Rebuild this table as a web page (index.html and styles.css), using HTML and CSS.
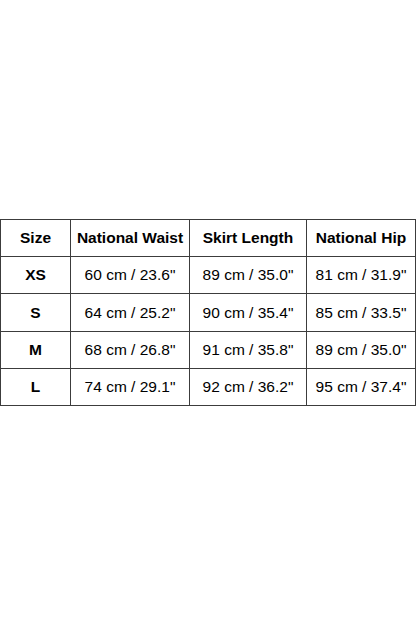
FILE: index.html
```html
<!DOCTYPE html>
<html>
<head>
<meta charset="utf-8">
<link rel="stylesheet" href="styles.css">
</head>
<body>
<div class="page">
  <table class="size-table">
    <colgroup>
      <col class="c1"><col class="c2"><col class="c3"><col class="c4">
    </colgroup>
    <thead>
      <tr><th>Size</th><th>National Waist</th><th>Skirt Length</th><th>National Hip</th></tr>
    </thead>
    <tbody>
      <tr><th>XS</th><td>60 cm / 23.6"</td><td>89 cm / 35.0"</td><td>81 cm / 31.9"</td></tr>
      <tr class="tall"><th>S</th><td>64 cm / 25.2"</td><td>90 cm / 35.4"</td><td>85 cm / 33.5"</td></tr>
      <tr><th>M</th><td>68 cm / 26.8"</td><td>91 cm / 35.8"</td><td>89 cm / 35.0"</td></tr>
      <tr><th>L</th><td>74 cm / 29.1"</td><td>92 cm / 36.2"</td><td>95 cm / 37.4"</td></tr>
    </tbody>
  </table>
</div>
</body>
</html>
```
FILE: styles.css
```css
html, body {
  margin: 0;
  padding: 0;
  background: #fff;
}
.page {
  height: 624px;
  padding-top: 219px;
  box-sizing: border-box;
}
.size-table {
  width: 416px;
  box-sizing: border-box;
  border-collapse: separate;
  border-spacing: 0;
  border-top: 1px solid #3c3c3c;
  border-left: 1px solid #3c3c3c;
  table-layout: fixed;
  font-family: "Liberation Sans", Arial, sans-serif;
  font-size: 15.5px;
  color: #000;
}
.c1 { width: 70px; }
.c2 { width: 119px; }
.c3 { width: 117px; }
.c4 { width: 109px; }
.size-table tr { height: 37px; }
.size-table tr.tall { height: 38px; }
.size-table th,
.size-table td {
  border-right: 1px solid #3c3c3c;
  border-bottom: 1px solid #3c3c3c;
  padding: 0;
  text-align: center;
  vertical-align: middle;
  white-space: nowrap;
}
.size-table th {
  font-weight: bold;
}
.size-table td {
  font-weight: normal;
}
```
